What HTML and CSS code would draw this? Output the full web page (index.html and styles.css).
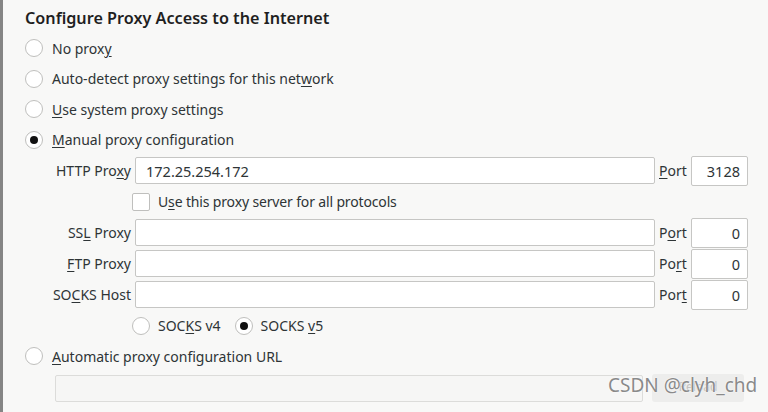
FILE: index.html
```html
<!DOCTYPE html>
<html>
<head>
<meta charset="utf-8">
<link rel="stylesheet" href="styles.css">
</head>
<body>
<div class="window">
  <div class="strip"></div>
  <div class="content">
    <div class="title">Configure Proxy Access to the Internet</div>
    <div class="opt"><span class="radio"></span><span>No prox<u>y</u></span></div>
    <div class="opt"><span class="radio"></span><span>Auto-detect proxy settings for this net<u>w</u>ork</span></div>
    <div class="opt"><span class="radio"></span><span><u>U</u>se system proxy settings</span></div>
    <div class="opt"><span class="radio checked"></span><span><u>M</u>anual proxy configuration</span></div>

    <div class="manual">
      <span class="lbl">HTTP Pro<u>x</u>y</span>
      <span class="field">172.25.254.172</span>
      <span class="plbl"><u>P</u>ort</span>
      <span class="port">3128</span>

      <div class="check-row"><span class="checkbox"></span><span class="check-text">U<u>s</u>e this proxy server for all protocols</span></div>

      <span class="lbl">SS<u>L</u> Proxy</span>
      <span class="field"></span>
      <span class="plbl">P<u>o</u>rt</span>
      <span class="port">0</span>

      <span class="lbl"><u>F</u>TP Proxy</span>
      <span class="field"></span>
      <span class="plbl">Po<u>r</u>t</span>
      <span class="port">0</span>

      <span class="lbl">SO<u>C</u>KS Host</span>
      <span class="field"></span>
      <span class="plbl">Por<u>t</u></span>
      <span class="port">0</span>

      <div class="ver-row">
        <span class="radio"></span><span class="ver-text">SOC<u>K</u>S v4</span>
        <span class="radio checked"></span><span class="ver-text">SOCKS <u>v</u>5</span>
      </div>
    </div>

    <div class="opt"><span class="radio"></span><span><u>A</u>utomatic proxy configuration URL</span></div>
    <div class="url-row">
      <span class="url-input"></span>
      <span class="reload"><span class="reload-text">Reload</span></span>
    </div>
  </div>
  <div class="watermark">CSDN @clyh_chd</div>
</div>
</body>
</html>
```
FILE: styles.css
```css
* { box-sizing: border-box; }
html, body {
  margin: 0;
  padding: 0;
  width: 768px;
  height: 412px;
  overflow: hidden;
  background: #f8f8f7;
}
body {
  font-family: "Noto Sans", "Open Sans", sans-serif;
  font-size: 14px;
  color: #2e3436;
}
u { text-decoration-thickness: 1px; text-underline-offset: 2px; }
.window {
  position: relative;
  display: flex;
  width: 768px;
  height: 412px;
}
.strip {
  width: 3px;
  flex: none;
  background: #858585;
}
.content {
  flex: 1;
  padding: 3px 0 0 22px;
  display: flex;
  flex-direction: column;
}
.title {
  height: 30px;
  display: flex;
  align-items: center;
  font-size: 16.2px;
  font-weight: 600;
  color: #1f1f1f;
}
.opt {
  height: 30.5px;
  display: flex;
  align-items: center;
  gap: 9px;
}
.radio {
  width: 18px;
  height: 18px;
  flex: none;
  border-radius: 50%;
  border: 1px solid #bfbfbd;
  background: #fff;
  display: inline-flex;
  align-items: center;
  justify-content: center;
}
.radio.checked::after {
  content: "";
  width: 8px;
  height: 8px;
  border-radius: 50%;
  background: #111;
}
.manual {
  display: grid;
  grid-template-columns: 106px 520px 28px 57px;
  grid-auto-rows: 31px;
  column-gap: 4px;
  align-items: center;
}
.lbl {
  justify-self: end;
  white-space: nowrap;
}
.plbl {
  white-space: nowrap;
}
.field {
  height: 27px;
  background: #fff;
  border: 1px solid #c6c6c4;
  border-radius: 2px;
  padding: 0 0 0 10px;
  display: flex;
  align-items: center;
  font-size: 14.5px;
}
.port {
  height: 30px;
  background: #fff;
  border: 1px solid #c6c6c4;
  border-radius: 2px;
  padding: 0 7px 0 0;
  display: flex;
  align-items: center;
  justify-content: flex-end;
  font-size: 14.5px;
}
.check-row {
  grid-column: 2 / 5;
  display: flex;
  align-items: center;
  gap: 8px;
  margin-left: -3px;
}
.check-text { letter-spacing: -0.15px; }
.checkbox {
  width: 18px;
  height: 18px;
  background: #fff;
  border: 1px solid #bfbfbd;
  border-radius: 2px;
}
.ver-row {
  grid-column: 2 / 5;
  display: flex;
  align-items: center;
  margin-left: -3px;
}
.ver-row .radio + .ver-text { margin-left: 8px; }
.ver-text { margin-right: 14px; }
.url-row {
  display: flex;
  align-items: center;
  height: 33px;
  padding-left: 30px;
}
.url-input {
  width: 588px;
  height: 27px;
  border: 1px solid #dcdcda;
  border-radius: 2px;
  background: #f6f6f5;
}
.reload {
  margin-left: 9px;
  width: 92px;
  height: 28px;
  border-radius: 3px;
  background: #ededec;
  display: flex;
  align-items: center;
  justify-content: center;
}
.reload-text {
  color: #c2c2c2;
  font-size: 12px;
  margin-top: -4px;
}
.watermark {
  position: absolute;
  left: 608px;
  top: 372px;
  font-size: 19px;
  color: #8a8a8a;
  text-shadow: 0 0 2px #fff, 0 0 1px #fff;
  white-space: nowrap;
}
```
